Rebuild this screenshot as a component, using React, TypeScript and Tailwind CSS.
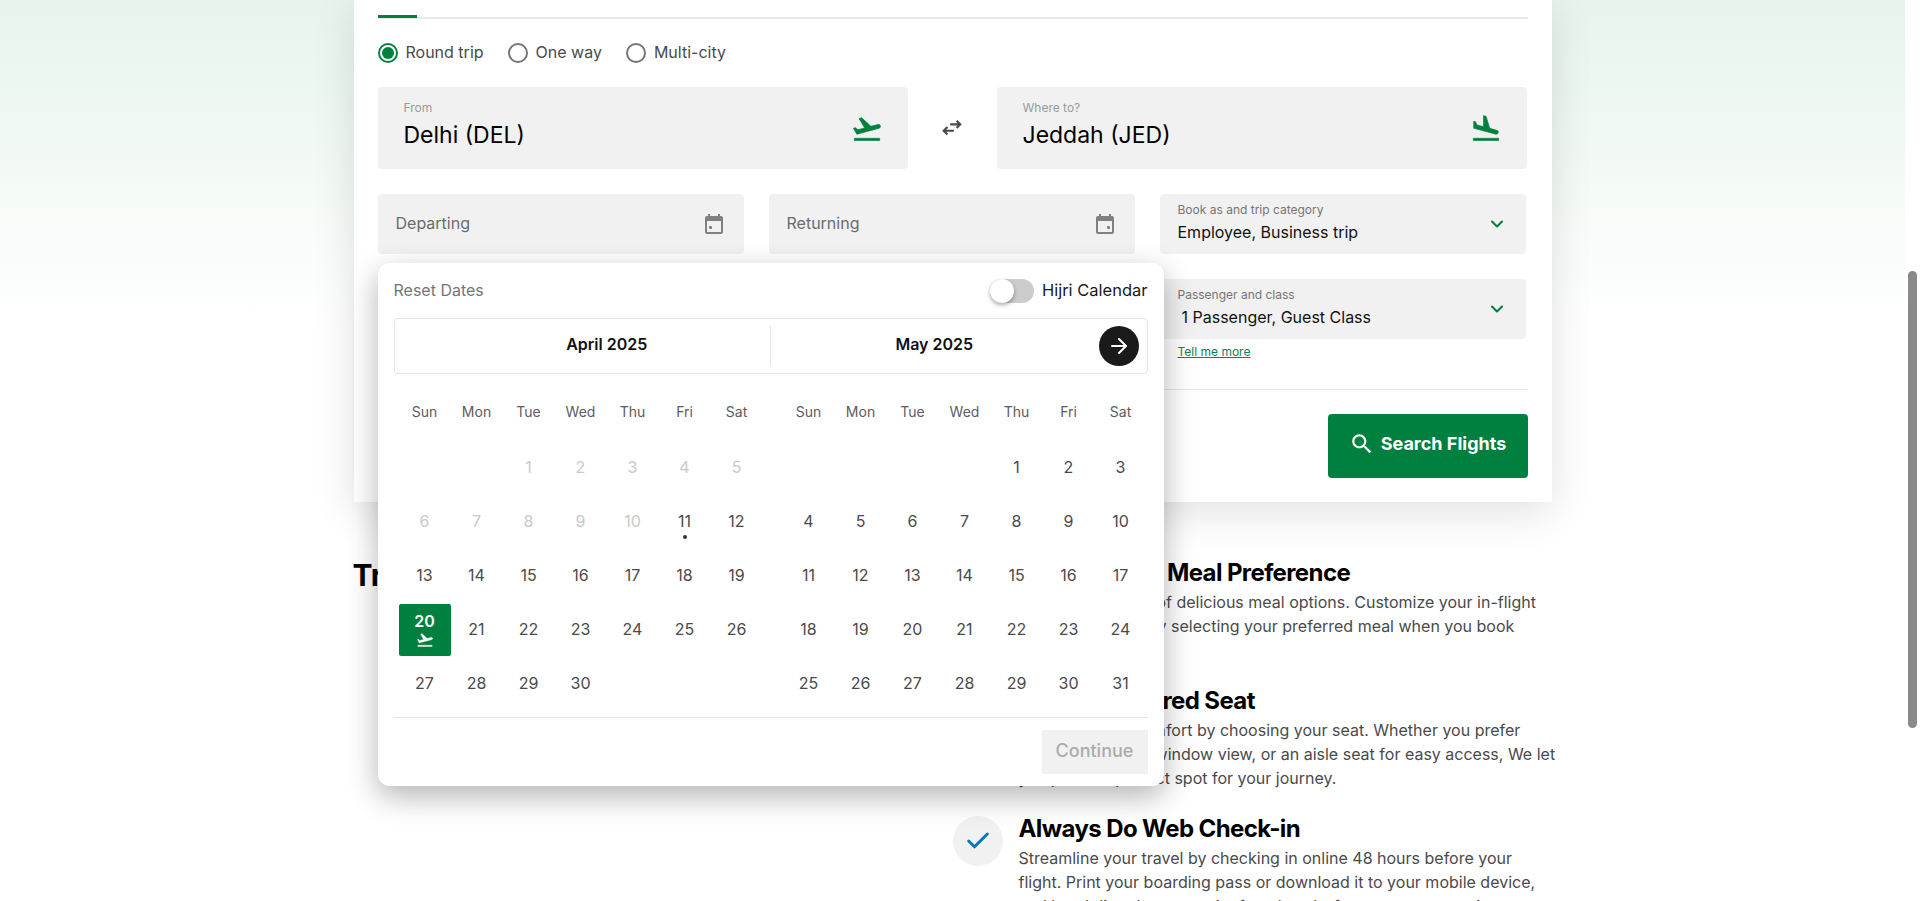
import { ArrowRight, Check, ChevronDown } from "lucide-react"

const weekdays = ["Sun", "Mon", "Tue", "Wed", "Thu", "Fri", "Sat"]

function range(a: number, b: number) {
  const out: number[] = []
  for (let i = a; i <= b; i++) out.push(i)
  return out
}

function TakeoffIcon({ className }: { className: string }) {
  return (
    <svg viewBox="0 0 24 24" fill="currentColor" stroke="currentColor" strokeWidth="0.5" className={className}>
      <path d="M2.5 19h19v1.6h-19v-1.6zm19.57-9.36c-.21-.8-1.04-1.28-1.84-1.06L14.92 10 8 3.57l-1.93.51 4.14 7.17-4.97 1.33-1.97-1.54-1.45.39 1.82 3.16.77 1.33 1.6-.43 5.31-1.42 4.35-1.16L21 11.49c.81-.23 1.28-1.05 1.07-1.85z" />
    </svg>
  )
}

function LandIcon({ className }: { className: string }) {
  return (
    <svg viewBox="0 0 24 24" fill="currentColor" stroke="currentColor" strokeWidth="0.5" className={className}>
      <path d="M2.5 19h19v1.6h-19v-1.6zm7.18-5.73 4.35 1.16 5.31 1.42c.8.21 1.62-.26 1.84-1.06.21-.8-.26-1.62-1.06-1.84l-5.31-1.42-2.76-9.02L10.12 2v8.28L5.15 8.95l-.93-2.32-1.45-.39v5.17l1.6.43 5.31 1.43z" />
    </svg>
  )
}

function EventIcon({ right }: { right?: boolean }) {
  return (
    <svg viewBox="0 0 24 24" fill="#808080" className="h-6 w-6">
      <path d="M19 4h-1V2h-2v2H8V2H6v2H5c-1.1 0-2 .9-2 2v14c0 1.1.9 2 2 2h14c1.1 0 2-.9 2-2V6c0-1.1-.9-2-2-2zm0 16H5V9h14v11z" />
      {right ? <rect x="14" y="14" width="3" height="3" rx="1" /> : <rect x="7" y="14" width="3" height="3" rx="1" />}
    </svg>
  )
}

function Radio({ label, checked }: { label: string; checked?: boolean }) {
  return (
    <div className="flex items-center gap-2">
      <span
        className={`flex h-5 w-5 items-center justify-center rounded-full border-2 ${checked ? "border-[#00803e]" : "border-[#757575]"}`}
      >
        {checked && <span className="h-3 w-3 rounded-full bg-[#00803e]" />}
      </span>
      <span className="pb-[2px] text-base text-[#4a4a4a]">{label}</span>
    </div>
  )
}

function CityBox({ label, value, land }: { label: string; value: string; land?: boolean }) {
  return (
    <div className="flex h-[82px] w-[530px] items-center justify-between rounded bg-[#f1f1f1] pl-[26px] pr-[25px]">
      <div className="mb-[5px]">
        <div className="text-xs leading-4 text-[#9a9a9a]">{label}</div>
        <div className="mt-[3px] text-[23px] leading-8 text-black">{value}</div>
      </div>
      {land ? <LandIcon className="mt-[2px] h-8 w-8 text-[#00803e]" /> : <TakeoffIcon className="mt-[2px] h-8 w-8 text-[#00803e]" />}
    </div>
  )
}

function DateBox({ label, right }: { label: string; right?: boolean }) {
  return (
    <div className="flex h-[60px] w-[366px] items-center justify-between rounded bg-[#f1f1f1] pl-[18px] pr-[18px]">
      <span className="pb-[2px] text-base text-[#6b6b6b]">{label}</span>
      <EventIcon right={right} />
    </div>
  )
}

function SelectBox({ label, value, inset }: { label: string; value: string; inset?: boolean }) {
  return (
    <div className="flex h-[60px] w-[366px] items-center justify-between rounded bg-[#f1f1f1] pl-[18px] pr-[19px]">
      <div className="mb-[2px]">
        <div className="text-xs leading-4 text-[#757575]">{label}</div>
        <div className={`mt-[2px] text-base leading-6 text-[#111] ${inset ? "pl-1" : ""}`}>{value}</div>
      </div>
      <ChevronDown className="h-5 w-5 text-[#00803e]" strokeWidth={2.5} />
    </div>
  )
}

function Month({
  blanks,
  muted,
  days,
  selected,
  dotted,
}: {
  blanks: number
  muted: number[]
  days: number[]
  selected?: number
  dotted?: number
}) {
  return (
    <div className="grid w-[364px] grid-cols-7">
      {weekdays.map((d) => (
        <div key={d} className="flex h-[54px] items-center justify-center pb-[2px] text-sm text-[#5c5c5c]">
          {d}
        </div>
      ))}
      {range(1, blanks).map((b) => (
        <div key={b} className="h-[54px]" />
      ))}
      {muted.map((d) => (
        <div key={d} className="flex h-[54px] items-center justify-center text-base text-[#c9c9c9]">
          {d}
        </div>
      ))}
      {days.map((d) =>
        d === selected ? (
          <div key={d} className="flex h-[54px] items-end justify-center">
            <div className="flex h-[52px] w-[52px] flex-col items-center justify-center rounded-[2px] bg-[#00803e] font-semibold text-white">
              <span className="text-base leading-5">{d}</span>
              <TakeoffIcon className="h-[18px] w-[18px]" />
            </div>
          </div>
        ) : (
          <div key={d} className="relative flex h-[54px] items-center justify-center text-base text-[#4a4a4a]">
            {d}
            {d === dotted && <span className="absolute bottom-[9px] h-1 w-1 rounded-full bg-[#333]" />}
          </div>
        ),
      )}
    </div>
  )
}

function Tip({ title, lines, icon }: { title: string; lines: string[]; icon?: boolean }) {
  return (
    <div className="flex h-[128px] gap-4">
      <div className="mt-[3px] flex h-[50px] w-[50px] shrink-0 items-center justify-center rounded-full bg-[#f1f1f1]">
        {icon && <Check className="h-7 w-7 text-[#0077b6]" strokeWidth={2.5} />}
      </div>
      <div>
        <h3 className="text-2xl font-bold leading-8 tracking-tight text-black">{title}</h3>
        <p className="mt-px whitespace-nowrap text-base leading-6 text-[#4a4a4a]">
          {lines.map((l) => (
            <span key={l} className="block">
              {l}
            </span>
          ))}
        </p>
      </div>
    </div>
  )
}

export default function App() {
  return (
    <div className="flex h-[901px] overflow-hidden bg-white font-['Inter',sans-serif]">
      <div className="flex-1 bg-gradient-to-b from-[#e6f4ec] to-white to-[36%]">
        <div className="relative mx-auto w-[1198px]">
          <div className="h-[502px] bg-white px-6 shadow-[0_10px_40px_rgba(0,0,0,0.12)]">
            <div className="h-[19px] border-b-2 border-[#e8e8e8]">
              <div className="h-[18px] w-[39px] border-b-[3px] border-[#00803e]" />
            </div>
            <div className="mt-6 flex h-5 items-center gap-6">
              <Radio label="Round trip" checked />
              <Radio label="One way" />
              <Radio label="Multi-city" />
            </div>
            <div className="mr-px mt-[24px] flex items-center justify-between">
              <CityBox label="From" value="Delhi (DEL)" />
              <svg viewBox="0 0 24 24" fill="none" stroke="#4a4a4a" strokeWidth="2.4" className="h-[22px] w-[22px]">
                <path d="M10 8h11M17 4l4 4-4 4M14 15H3M7 11l-4 4 4 4" />
              </svg>
              <CityBox label="Where to?" value="Jeddah (JED)" land />
            </div>
            <div className="mt-[25px] flex gap-[25px]">
              <DateBox label="Departing" />
              <DateBox label="Returning" right />
              <SelectBox label="Book as and trip category" value="Employee, Business trip" />
            </div>
            <div className="mr-[2px] mt-[25px] flex justify-end">
              <div className="w-[366px]">
                <SelectBox label="Passenger and class" value="1 Passenger, Guest Class" inset />
                <a className="ml-[18px] mt-[5px] block text-xs leading-4 text-[#00875a] underline">Tell me more</a>
              </div>
            </div>
            <div className="mt-[29px] border-t border-[#e4e4e4]" />
            <div className="mt-6 flex justify-end">
              <button className="flex h-16 w-[200px] items-center justify-center gap-[6px] rounded bg-[#00803e] pb-1 text-lg font-bold text-white">
                <svg viewBox="0 0 24 24" fill="currentColor" className="h-[26px] w-[26px]">
                  <path d="M15.5 14h-.79l-.28-.27C15.41 12.59 16 11.11 16 9.5 16 5.91 13.09 3 9.5 3S3 5.91 3 9.5 5.91 16 9.5 16c1.61 0 3.09-.59 4.23-1.57l.27.28v.79l5 4.99L20.49 19l-4.99-5zm-6 0C7.01 14 5 11.99 5 9.5S7.01 5 9.5 5 14 7.01 14 9.5 11.99 14 9.5 14z" />
                </svg>
                Search Flights
              </button>
            </div>
          </div>

          <div className="flex justify-between pt-[55px]">
            <h2 className="-ml-px text-3xl font-bold leading-9 text-black">Travel Tips</h2>
            <div className="w-[599px]">
              <Tip
                title="Choose Your Meal Preference"
                lines={[
                  "Pick from a range of delicious meal options. Customize your in-flight",
                  "meal experience by selecting your preferred meal when you book",
                  "your flight.",
                ]}
              />
              <Tip
                title="Select Preferred Seat"
                lines={[
                  "Maximize your comfort by choosing your seat. Whether you prefer",
                  "a seat with a nice window view, or an aisle seat for easy access, We let",
                  "you pick the perfect spot for your journey.",
                ]}
              />
              <Tip
                title="Always Do Web Check-in"
                lines={[
                  "Streamline your travel by checking in online 48 hours before your",
                  "flight. Print your boarding pass or download it to your mobile device,",
                  "and head directly to security for a hassle-free start to your trip.",
                ]}
                icon
              />
            </div>
          </div>

          <div className="absolute left-6 top-[263px] h-[523px] w-[786px] rounded-xl bg-white px-4 pt-[16px] shadow-[0_10px_30px_rgba(0,0,0,0.3)]">
            <div className="flex h-6 items-center justify-between">
              <span className="pb-[2px] text-base text-[#757575]">Reset Dates</span>
              <div className="flex items-center gap-2">
                <span className="relative h-6 w-11 rounded-full bg-[#cccccc]">
                  <span className="absolute left-0 top-0 h-6 w-6 rounded-full bg-white shadow-[0_2px_4px_rgba(0,0,0,0.35)]" />
                </span>
                <span className="pb-[2px] text-[16.5px] text-[#1a1a1a]">Hijri Calendar</span>
              </div>
            </div>
            <div className="relative mt-[15px] flex h-14 items-center rounded border border-[#e4e4e4]">
              <div className="flex-1 pb-1 pl-[49px] text-center text-base font-semibold text-[#111]">April 2025</div>
              <div className="h-10 w-px bg-[#e4e4e4]" />
              <div className="flex-1 pb-1 pr-[49px] text-center text-base font-semibold text-[#111]">May 2025</div>
              <button className="absolute right-2 top-[7px] flex h-10 w-10 items-center justify-center rounded-full bg-[#1a1a1a] text-white">
                <ArrowRight className="h-6 w-6" strokeWidth={2} />
              </button>
            </div>
            <div className="mt-[12px] flex justify-between pl-[5px] pr-px">
              <Month blanks={2} muted={range(1, 10)} days={range(11, 30)} selected={20} dotted={11} />
              <Month blanks={4} muted={[]} days={range(1, 31)} />
            </div>
            <div className="mt-[7px] border-t border-[#e4e4e4]" />
            <div className="mt-3 flex justify-end">
              <button className="h-11 w-[106px] bg-[#f1f1f1] pb-[2px] text-lg font-medium text-[#ababab]">Continue</button>
            </div>
          </div>
        </div>
      </div>
      <div className="w-[15px] shrink-0 bg-white px-[3px] pt-[271px]">
        <div className="h-[457px] rounded-full bg-[#8a8a8a]" />
      </div>
    </div>
  )
}
